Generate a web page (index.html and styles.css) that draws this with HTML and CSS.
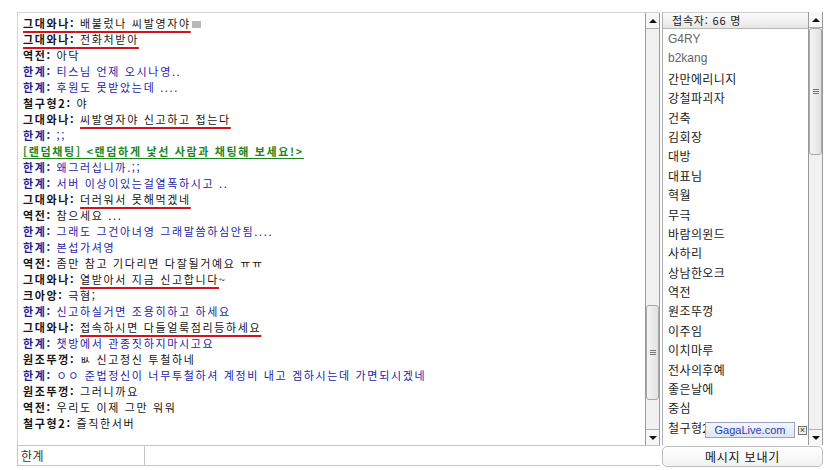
FILE: index.html
```html
<!DOCTYPE html>
<html lang="ko">
<head>
<meta charset="utf-8">
<title>채팅</title>
<link rel="stylesheet" href="styles.css">
</head>
<body>
<div class="app">
  <div class="chat-col">
    <div class="chat-main">
      <div class="chat-log">
        <div class="line first"><span class="mark"><b class="nm">그대와나:</b> 배불렀나 씨발영자야<i class="sq"></i></span></div>
        <div class="line"><span class="mark"><b class="nm">그대와나:</b> 전화처받아</span></div>
        <div class="line"><b class="nm">역전:</b> 아닥</div>
        <div class="line blue"><b class="nm">한계:</b> 티스님 언제 오시나영..</div>
        <div class="line blue"><b class="nm">한계:</b> 후원도 못받았는데 ....</div>
        <div class="line"><b class="nm">철구형2:</b> 야</div>
        <div class="line"><b class="nm">그대와나:</b> <span class="mark">씨발영자야 신고하고 접는다</span></div>
        <div class="line blue"><b class="nm">한계:</b> ;;</div>
        <div class="line green">[랜덤채팅] &lt;랜덤하게 낯선 사람과 채팅해 보세요!&gt;</div>
        <div class="line blue"><b class="nm">한계:</b> 왜그러십니까.;;</div>
        <div class="line blue"><b class="nm">한계:</b> 서버 이상이있는걸열폭하시고 ..</div>
        <div class="line"><b class="nm">그대와나:</b> <span class="mark">더러워서 못해먹겠네</span></div>
        <div class="line"><b class="nm">역전:</b> 참으세요 ...</div>
        <div class="line blue"><b class="nm">한계:</b> 그래도 그건아녀영 그래말씀하심안됨....</div>
        <div class="line blue"><b class="nm">한계:</b> 본섭가셔영</div>
        <div class="line"><b class="nm">역전:</b> 좀만 참고 기다리면 다잘될거예요 ㅠㅠ</div>
        <div class="line"><b class="nm">그대와나:</b> <span class="mark">열받아서 지금 신고합니다</span>~</div>
        <div class="line"><b class="nm">크아앙:</b> 극혐;</div>
        <div class="line blue"><b class="nm">한계:</b> 신고하실거면 조용히하고 하세요</div>
        <div class="line"><b class="nm">그대와나:</b> <span class="mark">접속하시면 다들얼룩점리등하세요</span></div>
        <div class="line blue"><b class="nm">한계:</b> 챗방에서 관종짓하지마시고요</div>
        <div class="line"><b class="nm">원조뚜껑:</b> ㅄ 신고정신 투철하네</div>
        <div class="line blue"><b class="nm">한계:</b> ㅇㅇ 준법정신이 너무투철하셔 계정비 내고 겜하시는데 가면되시겠네</div>
        <div class="line"><b class="nm">원조뚜껑:</b> 그러니까요</div>
        <div class="line"><b class="nm">역전:</b> 우리도 이제 그만 워워</div>
        <div class="line"><b class="nm">철구형2:</b> 즐직한서버</div>
      </div>
      <div class="vscroll">
        <div class="sbtn up"><i class="tri-up"></i></div>
        <div class="track">
          <div class="gap chat-gap"></div>
          <div class="thumb chat-thumb"><span class="grip"></span></div>
        </div>
        <div class="sbtn down"><i class="tri-down"></i></div>
      </div>
    </div>
    <div class="input-row">
      <div class="nick">한계</div>
      <div class="msg-input"></div>
    </div>
  </div>
  <div class="side">
    <div class="list-box">
      <div class="list">
        <div class="list-head">접속자: 66 명</div>
        <div class="items">
          <div class="item latin">G4RY</div>
          <div class="item latin">b2kang</div>
          <div class="item">간만에리니지</div>
          <div class="item">강철파괴자</div>
          <div class="item">건축</div>
          <div class="item">김회장</div>
          <div class="item">대방</div>
          <div class="item">대표님</div>
          <div class="item">혁월</div>
          <div class="item">무극</div>
          <div class="item">바람의윈드</div>
          <div class="item">사하리</div>
          <div class="item">상남한오크</div>
          <div class="item">역전</div>
          <div class="item">원조뚜껑</div>
          <div class="item">이주임</div>
          <div class="item">이치마루</div>
          <div class="item">전사의후예</div>
          <div class="item">좋은날에</div>
          <div class="item">중심</div>
          <div class="item">철구형2</div>
        </div>
      </div>
      <div class="vscroll">
        <div class="sbtn up"><i class="tri-up"></i></div>
        <div class="track">
          <div class="thumb list-thumb"><span class="grip"></span></div>
        </div>
        <div class="sbtn down"><i class="tri-down"></i></div>
      </div>
      <div class="gaga">
        <span class="gaga-label">GagaLive.com</span>
        <span class="gaga-x">×</span>
      </div>
    </div>
    <div class="send-btn">메시지 보내기</div>
  </div>
</div>
</body>
</html>
```
FILE: styles.css
```css
* { box-sizing: border-box; }
html, body { margin: 0; padding: 0; background: #fff; }
body {
  font-family: "Noto Sans CJK KR", "Noto Sans", sans-serif;
  font-size: 12px;
  color: #111;
}
.app {
  display: flex;
  padding: 12px 0 0 17px;
}
.chat-col {
  width: 643px;
  display: flex;
  flex-direction: column;
}
.chat-main {
  height: 433px;
  display: flex;
  border-top: 1px solid #d4d4d4;
  border-left: 1px solid #d4d4d4;
}
.chat-log {
  flex: 1;
  overflow: hidden;
  padding: 2px 0 0 5px;
  font-size: 11px;
  letter-spacing: 1.65px;
}
.line {
  height: 16px;
  line-height: 16px;
  white-space: nowrap;
  color: #151515;
}
.nm { font-weight: 700; }
.blue { color: #2424a8; }
.blue .nm { color: #1a1a9c; }
.green {
  color: #1b861b;
  font-weight: 700;
  text-decoration: underline;
  text-underline-offset: 2px;
}
.mark {
  text-decoration: underline;
  text-decoration-color: #d3121c;
  text-decoration-thickness: 2px;
  text-underline-offset: 3px;
}
.sq {
  display: inline-block;
  width: 9px;
  height: 7px;
  background: #b8b8b8;
  margin-left: 1px;
  vertical-align: 0;
}

/* scrollbars */
.vscroll {
  width: 15px;
  display: flex;
  flex-direction: column;
  border-left: 1px solid #9a9a9a;
  border-right: 1px solid #9a9a9a;
  background: #f1f1f1;
}
.sbtn {
  height: 16px;
  flex: none;
  background: #f7f7f7;
  display: flex;
  align-items: center;
  justify-content: center;
}
.sbtn.up { border-bottom: 1px solid #b0b0b0; }
.sbtn.down { border-top: 1px solid #b0b0b0; }
.tri-up {
  width: 0; height: 0;
  border-left: 4px solid transparent;
  border-right: 4px solid transparent;
  border-bottom: 4px solid #111;
}
.tri-down {
  width: 0; height: 0;
  border-left: 4px solid transparent;
  border-right: 4px solid transparent;
  border-top: 4px solid #111;
}
.track {
  flex: 1;
  display: flex;
  flex-direction: column;
}
.chat-gap { height: 276px; flex: none; }
.thumb {
  flex: none;
  background: linear-gradient(to right, #f4f4f4, #e2e2e2);
  border: 1px solid #a8a8a8;
  border-radius: 3px;
  display: flex;
  align-items: center;
  justify-content: center;
}
.chat-thumb { height: 95px; }
.list-thumb { height: 127px; }
.grip {
  width: 6px;
  height: 5px;
  border-top: 1px solid #777;
  border-bottom: 1px solid #777;
  position: relative;
}
.grip::after {
  content: "";
  position: absolute;
  left: 0; right: 0; top: 1px;
  border-top: 1px solid #777;
}

/* input row */
.input-row {
  height: 21px;
  display: flex;
  border: 1px solid #c4c4c4;
  border-right: none;
}
.nick {
  width: 127px;
  border-right: 1px solid #c4c4c4;
  padding-left: 3px;
  line-height: 19px;
  font-size: 12px;
  letter-spacing: 0.5px;
  color: #333;
}
.msg-input { flex: 1; }

/* side */
.side {
  width: 161px;
  margin-left: 2px;
  display: flex;
  flex-direction: column;
}
.list-box {
  height: 433px;
  display: flex;
  position: relative;
  border-left: 1px solid #b0b0b0;
}
.list {
  flex: 1;
  overflow: hidden;
  display: flex;
  flex-direction: column;
}
.list-head {
  height: 17px;
  flex: none;
  line-height: 15px;
  padding-left: 9px;
  font-size: 11px;
  letter-spacing: 0.8px;
  background: linear-gradient(#fcfcfc, #e6e6e6);
  border-top: 1px solid #cfcfcf;
  border-bottom: 1px solid #b8b8b8;
  color: #1a1a1a;
}
.items {
  padding-top: 1px;
}
.item {
  height: 19.4px;
  line-height: 19.4px;
  padding-left: 5px;
  font-size: 12px;
  letter-spacing: 0.4px;
  color: #1a1a1a;
  white-space: nowrap;
}
.item.latin { color: #666; font-family: "Liberation Sans", "Noto Sans", sans-serif; letter-spacing: 0; }
.gaga {
  position: absolute;
  left: 42px;
  top: 410px;
  display: flex;
  align-items: center;
  gap: 3px;
}
.gaga-label {
  width: 90px;
  height: 16px;
  line-height: 14px;
  text-align: center;
  font-family: "Liberation Sans", sans-serif;
  font-size: 11px;
  color: #1f3fb0;
  background: linear-gradient(#f4f6fc, #dfe5f4);
  border: 1px solid #9aa3c0;
}
.gaga-x {
  width: 9px;
  height: 9px;
  border: 1px solid #777;
  font-size: 9px;
  line-height: 6px;
  text-align: center;
  color: #333;
  background: #eee;
  font-family: "Liberation Sans", sans-serif;
}
.send-btn {
  height: 21px;
  margin-top: 1px;
  border: 1px solid #bdbdbd;
  border-radius: 5px;
  text-align: center;
  line-height: 19px;
  font-size: 12px;
  letter-spacing: 0.8px;
  color: #111;
  background: linear-gradient(#ffffff, #f2f2f2);
}
```
